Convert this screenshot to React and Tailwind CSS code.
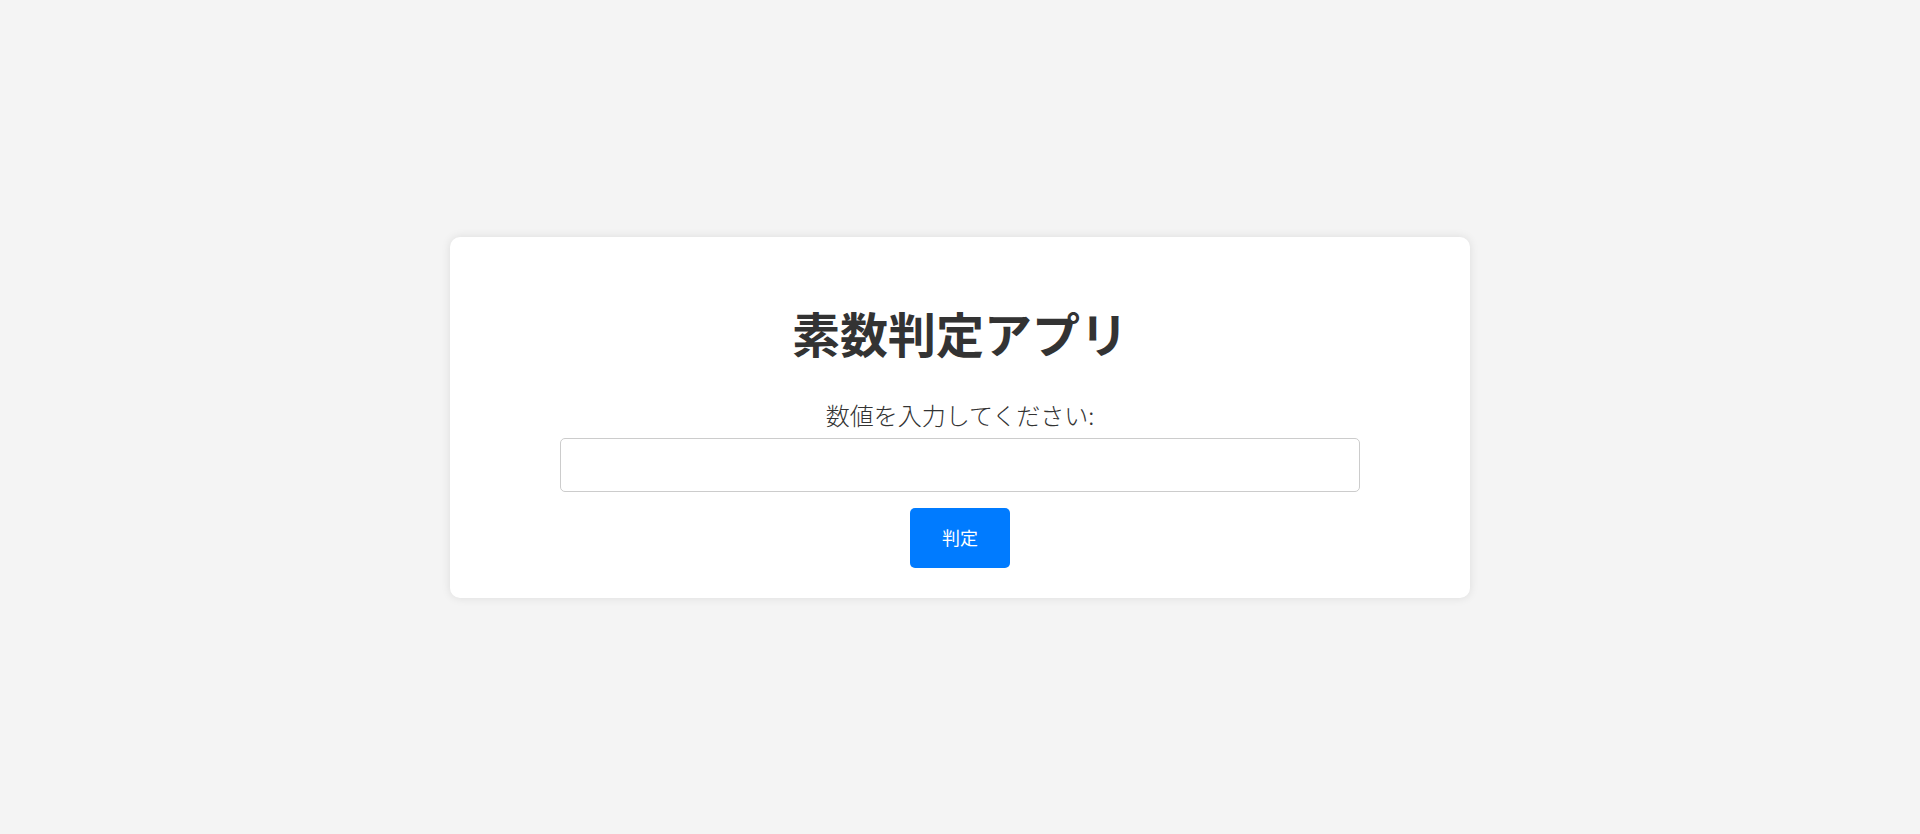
import { useState } from "react";

function App() {
  const [value, setValue] = useState("")

  return (
    <div
      className="min-h-screen bg-[#f4f4f4] flex items-center justify-center text-[#333]"
      style={{ fontFamily: '"Noto Sans CJK JP", "Noto Sans", sans-serif' }}
    >
      <div className="w-[1020px] bg-white rounded-[10px] shadow-[0_0_10px_rgba(0,0,0,0.1)] pt-[62px] pb-[30px] flex flex-col items-center">
        <h1 className="text-[48px] leading-[66px] font-bold">素数判定アプリ</h1>
        <label htmlFor="num" className="mt-[34px] text-[24px] leading-[32px] font-light">
          数値を入力してください:
        </label>
        <input
          id="num"
          type="number"
          value={value}
          onChange={e => setValue(e.target.value)}
          className="mt-[7px] w-[800px] h-[54px] border border-[#ccc] rounded-[5px] px-3 text-[18px] outline-none"
        />
        <button className="mt-[16px] w-[100px] h-[60px] bg-[#007bff] text-white text-[18px] rounded-[5px]">
          判定
        </button>
      </div>
    </div>
  )
}

export default App;
